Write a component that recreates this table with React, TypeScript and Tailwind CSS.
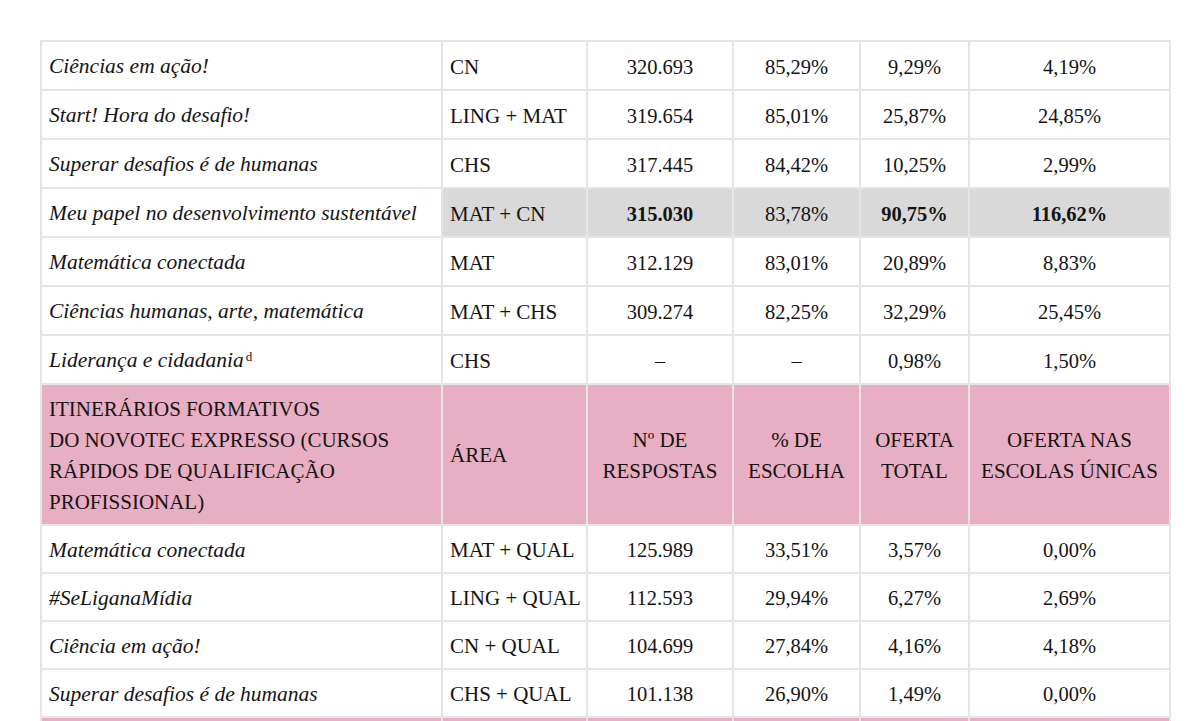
import React from 'react';

type Row = { name: React.ReactNode; area: string; resp: string; pct: string; total: string; unicas: string; highlight?: boolean };

const TOP_ROWS: Row[] = [
  { name: 'Ciências em ação!', area: 'CN', resp: '320.693', pct: '85,29%', total: '9,29%', unicas: '4,19%' },
  { name: 'Start! Hora do desafio!', area: 'LING + MAT', resp: '319.654', pct: '85,01%', total: '25,87%', unicas: '24,85%' },
  { name: 'Superar desafios é de humanas', area: 'CHS', resp: '317.445', pct: '84,42%', total: '10,25%', unicas: '2,99%' },
  { name: 'Meu papel no desenvolvimento sustentável', area: 'MAT + CN', resp: '315.030', pct: '83,78%', total: '90,75%', unicas: '116,62%', highlight: true },
  { name: 'Matemática conectada', area: 'MAT', resp: '312.129', pct: '83,01%', total: '20,89%', unicas: '8,83%' },
  { name: 'Ciências humanas, arte, matemática', area: 'MAT + CHS', resp: '309.274', pct: '82,25%', total: '32,29%', unicas: '25,45%' },
  {
    name: (
      <span>
        Liderança e cidadania<sup className="not-italic text-[13px] ml-[2px]">d</sup>
      </span>
    ),
    area: 'CHS', resp: '–', pct: '–', total: '0,98%', unicas: '1,50%',
  },
];

const BOTTOM_ROWS: Row[] = [
  { name: 'Matemática conectada', area: 'MAT + QUAL', resp: '125.989', pct: '33,51%', total: '3,57%', unicas: '0,00%' },
  { name: '#SeLiganaMídia', area: 'LING + QUAL', resp: '112.593', pct: '29,94%', total: '6,27%', unicas: '2,69%' },
  { name: 'Ciência em ação!', area: 'CN + QUAL', resp: '104.699', pct: '27,84%', total: '4,16%', unicas: '4,18%' },
  { name: 'Superar desafios é de humanas', area: 'CHS + QUAL', resp: '101.138', pct: '26,90%', total: '1,49%', unicas: '0,00%' },
];

function DataRow({ row, h }: { row: Row; h: string }) {
  const bg = row.highlight ? 'bg-[#d9d9d9]' : 'bg-white';
  const b = row.highlight ? 'font-bold' : '';
  return (
    <>
      <div className={`${h} bg-white flex items-center pl-[7px] pt-[3px] italic text-[21.5px]`}>{row.name}</div>
      <div className={`${h} ${bg} flex items-center pl-[7px] pt-[3px]`}>{row.area}</div>
      <div className={`${h} ${bg} ${b} flex items-center justify-center pt-[3px] text-[20.5px]`}>{row.resp}</div>
      <div className={`${h} ${bg} flex items-center justify-center pt-[3px] text-[20.5px]`}>{row.pct}</div>
      <div className={`${h} ${bg} ${b} flex items-center justify-center pt-[3px] text-[20.5px]`}>{row.total}</div>
      <div className={`${h} ${bg} ${b} flex items-center justify-center pt-[3px] text-[20.5px]`}>{row.unicas}</div>
    </>
  );
}

export default function App() {
  return (
    <div className="w-[1200px] h-[721px] overflow-hidden bg-white pt-[40px] pl-[40px] font-['Liberation_Serif','Times_New_Roman',serif]">
      <div className="w-[1131px] grid grid-cols-[399px_143px_144px_125px_107px_199px] gap-[2px] p-[2px] pb-0 bg-[#e5e5e5] text-[21px] text-[#141414] leading-none">
        {TOP_ROWS.map((r, i) => (
          <DataRow key={i} row={r} h="h-[47px]" />
        ))}

        {/* Pink header */}
        <div className="h-[139px] bg-[#e8aec3] flex items-center pl-[7px] pt-[2px] leading-[31px]">
          ITINERÁRIOS FORMATIVOS
          <br />
          DO NOVOTEC EXPRESSO (CURSOS
          <br />
          RÁPIDOS DE QUALIFICAÇÃO
          <br />
          PROFISSIONAL)
        </div>
        <div className="h-[139px] bg-[#e8aec3] flex items-center pl-[7px] pt-[2px]">ÁREA</div>
        <div className="h-[139px] bg-[#e8aec3] flex items-center justify-center text-center pt-[2px] leading-[31px]">
          Nº DE
          <br />
          RESPOSTAS
        </div>
        <div className="h-[139px] bg-[#e8aec3] flex items-center justify-center text-center pt-[2px] leading-[31px]">
          % DE
          <br />
          ESCOLHA
        </div>
        <div className="h-[139px] bg-[#e8aec3] flex items-center justify-center text-center pt-[2px] leading-[31px]">
          OFERTA
          <br />
          TOTAL
        </div>
        <div className="h-[139px] bg-[#e8aec3] flex items-center justify-center text-center pt-[2px] leading-[31px]">
          OFERTA NAS
          <br />
          ESCOLAS ÚNICAS
        </div>

        {BOTTOM_ROWS.map((r, i) => (
          <DataRow key={i} row={r} h="h-[46px]" />
        ))}

        {[0, 1, 2, 3, 4, 5].map((i) => (
          <div key={i} className="h-[20px] bg-[#e8aec3]" />
        ))}
      </div>
    </div>
  );
}
